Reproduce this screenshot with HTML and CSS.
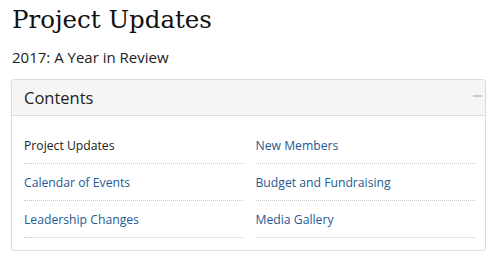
FILE: index.html
```html
<!DOCTYPE html>
<html lang="en">
<head>
    <meta charset="UTF-8">
    <meta name="viewport" content="width=device-width, initial-scale=1.0">
    <title>Project Updates</title>
    <link rel="stylesheet" href="styles.css">
</head>
<body>
    <div class="page">
        <h1 class="page-title">Project Updates</h1>
        <p class="subtitle">2017: A Year in Review</p>

        <div class="toc">
            <div class="toc-header">
                <span class="toc-title">Contents</span>
                <span class="toc-toggle"></span>
            </div>
            <ul class="toc-list">
                <li class="current">Project Updates</li>
                <li><a href="#">New Members</a></li>
                <li><a href="#">Calendar of Events</a></li>
                <li><a href="#">Budget and Fundraising</a></li>
                <li><a href="#">Leadership Changes</a></li>
                <li><a href="#">Media Gallery</a></li>
            </ul>
        </div>
    </div>
</body>
</html>
```

FILE: styles.css
```css
body {
    margin: 0;
    padding: 0;
    background-color: #fff;
    color: #222;
    font-family: "Open Sans", "Liberation Sans", sans-serif;
}

.page {
    padding: 0 9px 0 11px;
}

.page-title {
    margin: 0;
    padding: 4px 0 0 1px;
    font-family: "DejaVu Serif", "Liberation Serif", serif;
    font-weight: normal;
    font-size: 24.5px;
    line-height: 32px;
    color: #111;
}

.subtitle {
    margin: 11px 0 0 1px;
    font-size: 15px;
    line-height: 20px;
}

.toc {
    margin-top: 12px;
    border: 1px solid #ddd;
    border-radius: 3px;
    box-shadow: 0 1px 2px rgba(0, 0, 0, 0.05);
}

.toc-header {
    display: flex;
    align-items: center;
    justify-content: space-between;
    height: 35px;
    padding: 0 3px 0 12px;
    background-color: #f5f5f5;
    border-bottom: 1px solid #ddd;
    border-radius: 3px 3px 0 0;
}

.toc-title {
    font-size: 16.5px;
    line-height: 24px;
    color: #222;
}

.toc-toggle {
    width: 9px;
    height: 2px;
    margin-bottom: 3px;
    background-color: #ccc;
}

.toc-list {
    display: grid;
    grid-template-columns: 1fr 1fr;
    column-gap: 12px;
    margin: 0;
    padding: 11px 10px 12px 12px;
    list-style: none;
}

.toc-list li {
    padding: 10px 0 8px 0;
    font-size: 12.2px;
    line-height: 18px;
    border-bottom: 1px dotted #c8c8c8;
}

.toc-list li.current {
    color: #222;
}

.toc-list a {
    color: #1f5a93;
    text-decoration: none;
}
```
